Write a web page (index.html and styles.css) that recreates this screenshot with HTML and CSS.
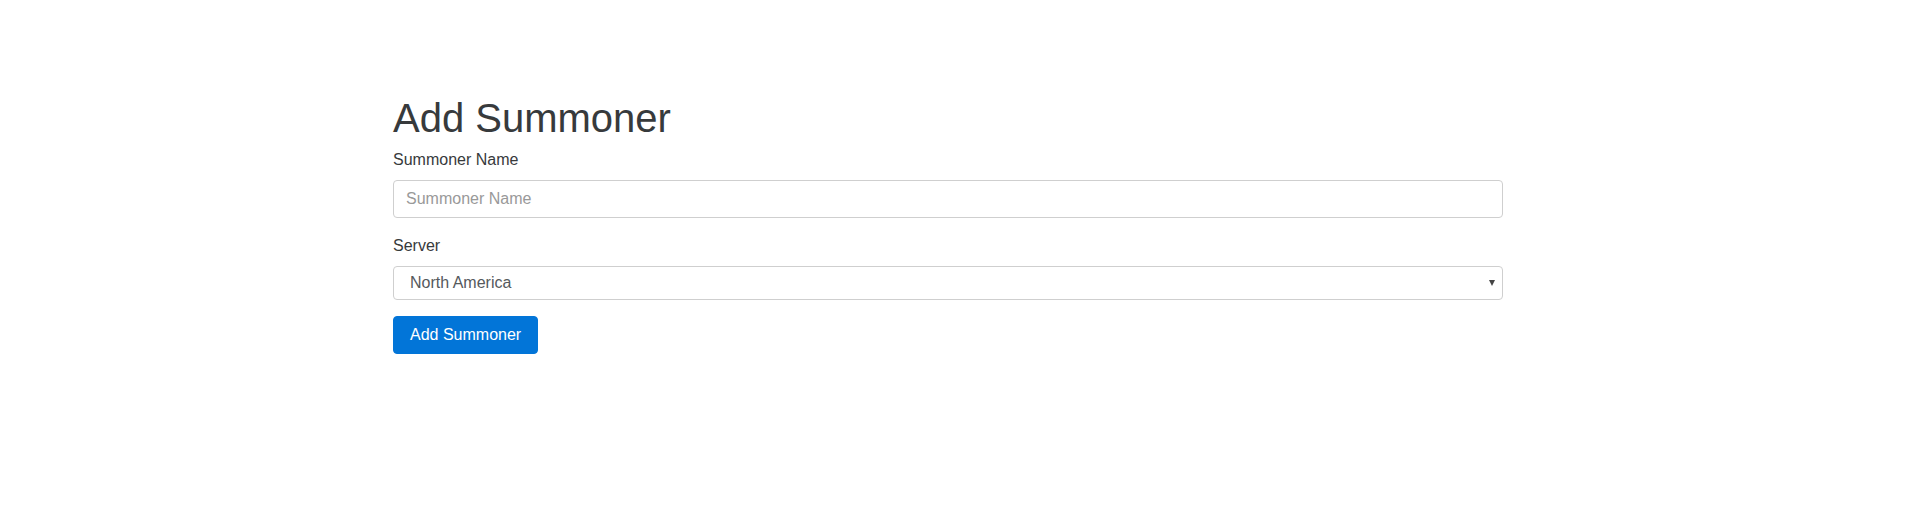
FILE: index.html
```html
<!DOCTYPE html>
<html lang="en">
<head>
<meta charset="utf-8">
<title>Add Summoner</title>
<link rel="stylesheet" href="styles.css">
</head>
<body>
<main class="container">
  <h1 class="title">Add Summoner</h1>
  <form class="form">
    <div class="form-group">
      <label class="label" for="name">Summoner Name</label>
      <input class="control" id="name" type="text" placeholder="Summoner Name">
    </div>
    <div class="form-group">
      <label class="label" for="server">Server</label>
      <div class="select-wrap">
        <select class="control select" id="server">
          <option>North America</option>
          <option>Europe West</option>
          <option>Europe Nordic &amp; East</option>
          <option>Korea</option>
        </select>
      </div>
    </div>
    <button class="btn" type="button">Add Summoner</button>
  </form>
</main>
</body>
</html>
```

FILE: styles.css
```css
* { box-sizing: border-box; }
html, body { margin: 0; padding: 0; background: #fff; }
body {
  font-family: "Liberation Sans", Arial, sans-serif;
  font-size: 16px;
  line-height: 1.5;
  color: #373a3c;
}
.container {
  width: 1110px;
  margin: 0 0 0 393px;
  padding: 96px 0 0;
}
.title {
  margin: 0 0 8px;
  font-size: 40px;
  font-weight: 400;
  line-height: 1.1;
  color: #373a3c;
}
.form { display: block; margin: 0; }
.form-group { margin-bottom: 16px; }
.label {
  display: inline-block;
  margin-bottom: 8px;
  color: #373a3c;
}
.control {
  display: block;
  width: 100%;
  height: 38px;
  padding: 8px 12px;
  font-family: inherit;
  font-size: 16px;
  line-height: 20px;
  color: #55595c;
  background: #fff;
  border: 1px solid #cfcfcf;
  border-radius: 4px;
  outline: none;
  margin: 0;
}
.control::placeholder { color: #999; opacity: 1; }
.select-wrap { position: relative; }
.select {
  -webkit-appearance: none;
  appearance: none;
  height: 34px;
  padding: 6px 30px 6px 16px;
  line-height: 20px;
  color: #55595c;
}
.select-wrap::after {
  content: "";
  position: absolute;
  right: 8px;
  top: 14px;
  width: 0;
  height: 0;
  border-left: 3.5px solid transparent;
  border-right: 3.5px solid transparent;
  border-top: 6px solid #444;
  pointer-events: none;
}
.btn {
  display: inline-block;
  height: 38px;
  padding: 8px 16px;
  font-family: inherit;
  font-size: 16px;
  line-height: 20px;
  color: #fff;
  background: #0275d8;
  border: 1px solid #0275d8;
  border-radius: 4px;
  cursor: pointer;
}
```
